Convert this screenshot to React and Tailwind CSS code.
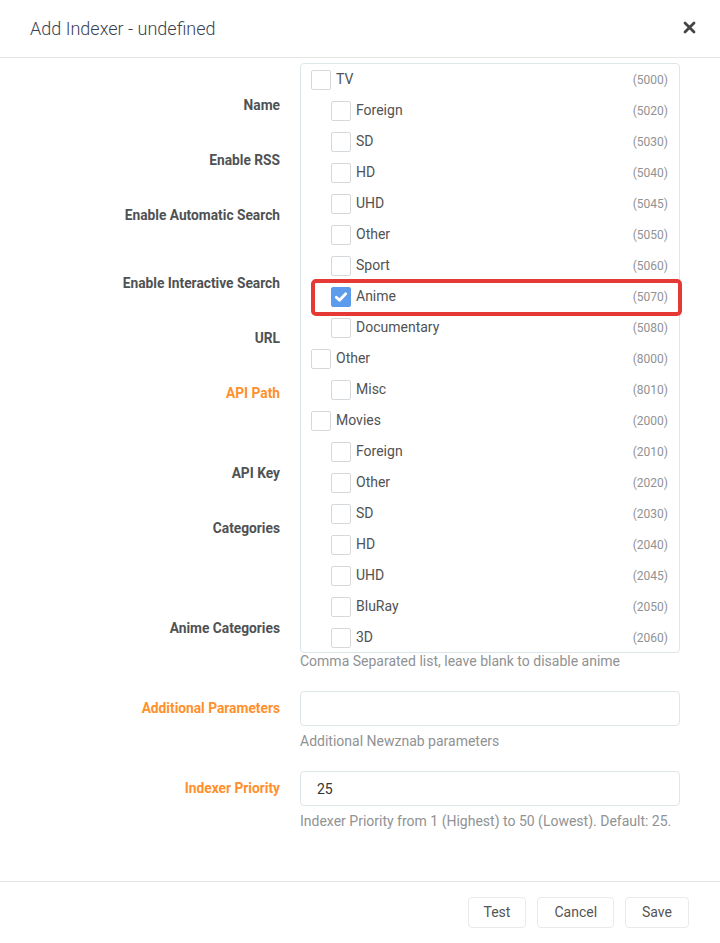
import React from 'react';

const categories = [
    {name: 'TV', id: 5000, level: 0},
    {name: 'Foreign', id: 5020, level: 1},
    {name: 'SD', id: 5030, level: 1},
    {name: 'HD', id: 5040, level: 1},
    {name: 'UHD', id: 5045, level: 1},
    {name: 'Other', id: 5050, level: 1},
    {name: 'Sport', id: 5060, level: 1},
    {name: 'Anime', id: 5070, level: 1, checked: true},
    {name: 'Documentary', id: 5080, level: 1},
    {name: 'Other', id: 8000, level: 0},
    {name: 'Misc', id: 8010, level: 1},
    {name: 'Movies', id: 2000, level: 0},
    {name: 'Foreign', id: 2010, level: 1},
    {name: 'Other', id: 2020, level: 1},
    {name: 'SD', id: 2030, level: 1},
    {name: 'HD', id: 2040, level: 1},
    {name: 'UHD', id: 2045, level: 1},
    {name: 'BluRay', id: 2050, level: 1},
    {name: '3D', id: 2060, level: 1},
];

const Checkbox = ({checked}) => (
    checked ? (
        <span className="flex h-[20px] w-[20px] shrink-0 items-center justify-center rounded-[2px] border border-[#5d9cec] bg-[#5d9cec]">
            <svg width="14" height="14" viewBox="0 0 14 14">
                <path d="M2.3 7.3 L5.5 10.3 L11.7 3.7" fill="none" stroke="#fff" strokeWidth="2.8" strokeLinecap="round" strokeLinejoin="round"/>
            </svg>
        </span>
    ) : (
        <span className="h-[20px] w-[20px] shrink-0 rounded-[2px] border border-[#d5d9dc] bg-white"/>
    )
);

const CategoryRow = ({cat}) => (
    <div className={`flex h-[31px] items-center pr-[11px] ${cat.level ? 'pl-[30px]' : 'pl-[10px]'}`}>
        <Checkbox checked={cat.checked}/>
        <span className="ml-[5px] flex-1 text-[14px] text-[#515253]">{cat.name}</span>
        <span className="text-[12px] text-[#909293]">({cat.id})</span>
    </div>
);

// a form row: label column + content column
const Row = ({label, advanced, className, children}) => (
    <div className={`flex ${className}`}>
        <div className={`flex h-[35px] w-[280px] shrink-0 items-center justify-end text-[13.75px] font-bold ${advanced ? 'text-[#ff902b]' : 'text-[#4f5254]'}`}>
            {label}
        </div>
        <div className="ml-[20px] w-[380px]">{children}</div>
    </div>
);

const HelpText = ({children}) => (
    <div className="mt-[5px] text-[14px] leading-[20px] text-[#909293]">{children}</div>
);

const App = () => {
    return (
        <div className="flex h-[943px] w-[720px] flex-col bg-white font-['Roboto','Liberation_Sans',sans-serif]">
            <div className="flex h-[58px] shrink-0 items-center justify-between border-b border-[#e5e5e5] pl-[30px] pr-[24px]">
                <h2 className="text-[18px] font-light text-[#3a3f51]">Add Indexer - undefined</h2>
                <svg width="13" height="13" viewBox="0 0 13 13" className="mb-[2px]">
                    <path d="M2 2 L11 11 M11 2 L2 11" stroke="#444" strokeWidth="2.8" strokeLinecap="round"/>
                </svg>
            </div>

            <div className="relative flex-1 pt-[30px]">
                <Row label="Name" className="h-[55px]"/>
                <Row label="Enable RSS" className="h-[55px]"/>
                <Row label="Enable Automatic Search" className="h-[68px]"/>
                <Row label="Enable Interactive Search" className="h-[55px]"/>
                <Row label="URL" className="h-[55px]"/>
                <Row label="API Path" advanced className="h-[80px]"/>
                <Row label="API Key" className="h-[55px]"/>
                <Row label="Categories" className="h-[100px]"/>
                <Row label="Anime Categories" className="h-[80px]">
                    <div className="h-[35px]"/>
                    <HelpText>Comma Separated list, leave blank to disable anime</HelpText>
                </Row>
                <Row label="Additional Parameters" advanced className="h-[80px]">
                    <input className="h-[35px] w-full rounded-[4px] border border-[#dde6e9] px-[16px] text-[14px] outline-none"/>
                    <HelpText>Additional Newznab parameters</HelpText>
                </Row>
                <Row label="Indexer Priority" advanced className="h-[80px]">
                    <input defaultValue="25" className="h-[35px] w-full rounded-[4px] border border-[#dde6e9] px-[16px] text-[14px] text-[#333] outline-none"/>
                    <HelpText>Indexer Priority from 1 (Highest) to 50 (Lowest). Default: 25.</HelpText>
                </Row>

                {/* open categories dropdown */}
                <div className="absolute left-[300px] top-[5px] h-[590px] w-[380px] overflow-hidden rounded-[4px] border border-[#dde6e9] bg-white">
                    {categories.map((cat, i) => (
                        <CategoryRow key={i} cat={cat}/>
                    ))}
                </div>
                <div className="pointer-events-none absolute left-[311px] top-[221px] h-[37px] w-[371px] rounded-[5px] border-[4px] border-[#e53935]"/>
            </div>

            <div className="flex h-[62px] shrink-0 items-center justify-end gap-[11px] border-t border-[#e5e5e5] pr-[31px]">
                <button className="h-[31px] rounded-[4px] border border-[#eaeaea] px-[15px] text-[14px] text-[#555]">Test</button>
                <button className="h-[31px] rounded-[4px] border border-[#eaeaea] px-[16px] text-[14px] text-[#555]">Cancel</button>
                <button className="h-[31px] rounded-[4px] border border-[#eaeaea] px-[16px] text-[14px] text-[#555]">Save</button>
            </div>
        </div>
    );
};

export default App;
